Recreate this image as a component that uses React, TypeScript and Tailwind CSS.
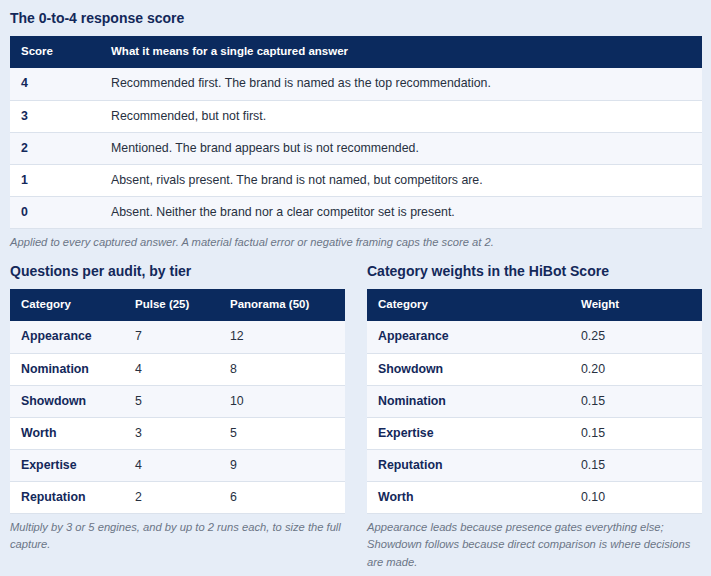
import React from 'react';

const font = { fontFamily: '"Liberation Sans", Arial, sans-serif' };

type Table = {
  widths: string[];
  head: string[];
  rows: string[][];
};

const scoreTable: Table = {
  widths: ['w-[90px]', ''],
  head: ['Score', 'What it means for a single captured answer'],
  rows: [
    ['4', 'Recommended first. The brand is named as the top recommendation.'],
    ['3', 'Recommended, but not first.'],
    ['2', 'Mentioned. The brand appears but is not recommended.'],
    ['1', 'Absent, rivals present. The brand is not named, but competitors are.'],
    ['0', 'Absent. Neither the brand nor a clear competitor set is present.'],
  ],
};

const tierTable: Table = {
  widths: ['w-[114px]', 'w-[95px]', ''],
  head: ['Category', 'Pulse (25)', 'Panorama (50)'],
  rows: [
    ['Appearance', '7', '12'],
    ['Nomination', '4', '8'],
    ['Showdown', '5', '10'],
    ['Worth', '3', '5'],
    ['Expertise', '4', '9'],
    ['Reputation', '2', '6'],
  ],
};

const weightTable: Table = {
  widths: ['w-[203px]', ''],
  head: ['Category', 'Weight'],
  rows: [
    ['Appearance', '0.25'],
    ['Showdown', '0.20'],
    ['Nomination', '0.15'],
    ['Expertise', '0.15'],
    ['Reputation', '0.15'],
    ['Worth', '0.10'],
  ],
};

const DataTable = ({ t }: { t: Table }) => (
  <table className="w-full table-fixed border-collapse">
    <colgroup>
      {t.widths.map((w, i) => (
        <col key={i} className={w} />
      ))}
    </colgroup>
    <thead>
      <tr className="bg-[#0b2a5e] h-[32px]">
        {t.head.map((h) => (
          <th key={h} className="text-left text-[11.5px] font-bold text-white pl-[11px] pr-2">
            {h}
          </th>
        ))}
      </tr>
    </thead>
    <tbody>
      {t.rows.map((r, i) => (
        <tr
          key={i}
          className={`h-[32px] border-b border-[#dbe2ec] ${i % 2 === 0 ? 'bg-[#f5f7fc]' : 'bg-white'}`}
        >
          {r.map((c, j) => (
            <td
              key={j}
              className={`pl-[11px] pr-2 text-[12.35px] ${j === 0 ? 'font-bold text-[#13285a]' : 'text-[#27303f]'}`}
            >
              {c}
            </td>
          ))}
        </tr>
      ))}
    </tbody>
  </table>
);

const Title = ({ children }: { children: React.ReactNode }) => (
  <h2 className="text-[14px] leading-[18px] font-bold text-[#13285a] mb-[9px]">{children}</h2>
);

const Note = ({ children }: { children: React.ReactNode }) => (
  <p className="mt-[5px] text-[11.2px] leading-[17.5px] italic text-[#6b7586]">{children}</p>
);

export default function App() {
  return (
    <div className="min-h-[576px] w-[711px] bg-[#e6edf7] pl-[10px] pr-[9px] pt-[9px]" style={font}>
      <section>
        <Title>The 0-to-4 response score</Title>
        <DataTable t={scoreTable} />
        <Note>
          Applied to every captured answer. A material factual error or negative framing caps the score at 2.
        </Note>
      </section>

      <div className="mt-[11px] grid grid-cols-2 gap-[22px]">
        <section>
          <Title>Questions per audit, by tier</Title>
          <DataTable t={tierTable} />
          <Note>Multiply by 3 or 5 engines, and by up to 2 runs each, to size the full capture.</Note>
        </section>
        <section>
          <Title>Category weights in the HiBot Score</Title>
          <DataTable t={weightTable} />
          <Note>
            Appearance leads because presence gates everything else; Showdown follows because direct comparison is
            where decisions are made.
          </Note>
        </section>
      </div>
    </div>
  );
}
